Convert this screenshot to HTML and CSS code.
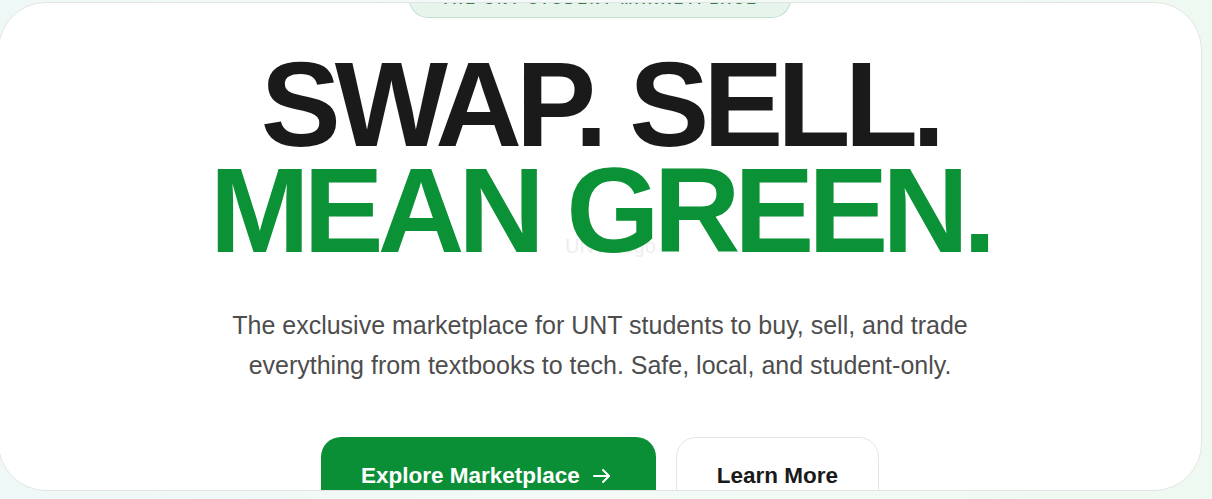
FILE: index.html
```html
<!DOCTYPE html>
<html lang="en">
<head>
<meta charset="utf-8">
<title>UNT Marketplace</title>
<link rel="stylesheet" href="styles.css">
</head>
<body>
  <main class="card">
    <span class="ghost">UNT Logo</span>
    <div class="badge">THE UNT STUDENT MARKETPLACE</div>
    <h1 class="headline">
      <span class="line dark">SWAP. SELL.</span>
      <span class="line green">MEAN GREEN.</span>
    </h1>
    <p class="lead">The exclusive marketplace for UNT students to buy, sell, and trade everything from textbooks to tech. Safe, local, and student-only.</p>
    <div class="actions">
      <a class="btn btn-primary" href="#">Explore Marketplace
        <svg class="arrow" width="24" height="24" viewBox="0 0 24 24" fill="none" stroke="currentColor" stroke-width="2" stroke-linecap="round" stroke-linejoin="round"><path d="M4 12h15"/><path d="M13 6l6 6-6 6"/></svg>
      </a>
      <a class="btn btn-secondary" href="#">Learn More</a>
    </div>
  </main>
</body>
</html>
```
FILE: styles.css
```css
html, body {
  margin: 0;
  padding: 0;
}
body {
  width: 1212px;
  height: 499px;
  overflow: hidden;
  background: linear-gradient(90deg, #eef8f6 0%, #f3faf7 50%, #eef9f1 100%);
  font-family: "Liberation Sans", Arial, sans-serif;
}
.card {
  position: relative;
  box-sizing: border-box;
  width: 1204px;
  height: 489px;
  margin: 2px 0 0 -2px;
  background: #ffffff;
  border: 1px solid #e3e5e4;
  border-radius: 48px;
  overflow: hidden;
  display: flex;
  flex-direction: column;
  align-items: center;
}
.card > * {
  flex-shrink: 0;
}
.ghost {
  position: absolute;
  left: 566px;
  top: 232px;
  font-size: 20px;
  color: #eeeeee;
  z-index: 0;
}
.badge {
  margin-top: -23px;
  box-sizing: border-box;
  width: 382px;
  height: 38px;
  padding-top: 11px;
  line-height: 16px;
  text-align: center;
  background: #e6f4ec;
  border: 1px solid #c0e2cd;
  border-top: none;
  border-radius: 0 0 19px 19px;
  color: #3f7a55;
  font-size: 14px;
  font-weight: 700;
  letter-spacing: 0.2em;
}
.headline {
  position: relative;
  z-index: 1;
  margin: 33px 0 0;
  text-align: center;
  font-size: 120px;
  font-weight: 700;
  line-height: 106px;
  letter-spacing: -0.05em;
}
.line {
  display: block;
}
.dark {
  color: #1a1a1a;
}
.green {
  color: #0b9136;
}
.lead {
  margin: 42px 0 0;
  width: 780px;
  text-align: center;
  font-size: 25px;
  line-height: 40px;
  color: #4d4d4d;
}
.actions {
  margin-top: 52px;
  display: flex;
  gap: 20px;
}
.btn {
  display: flex;
  align-items: center;
  gap: 10px;
  box-sizing: border-box;
  height: 76px;
  padding: 2px 40px 0;
  border-radius: 20px;
  font-size: 22.5px;
  font-weight: 700;
  text-decoration: none;
}
.btn-primary {
  background: #0b8f36;
  color: #ffffff;
  padding-right: 42px;
}
.btn-secondary {
  background: #ffffff;
  color: #1a1a1a;
  border: 1px solid #e5e5e5;
}
.arrow {
  display: block;
}
```
